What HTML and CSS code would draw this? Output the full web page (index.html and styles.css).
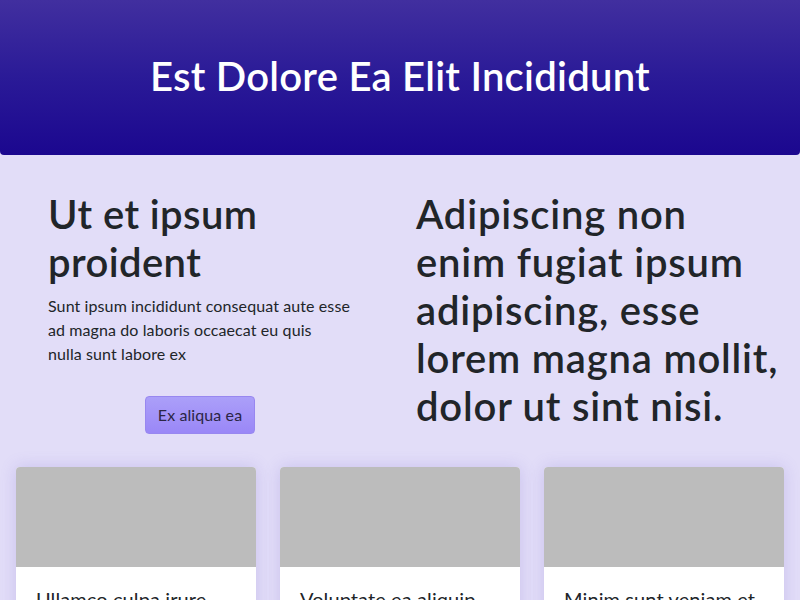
FILE: index.html
```html
<!DOCTYPE html>
<html lang="en">
<head>
<meta charset="utf-8">
<title>Est Dolore Ea Elit Incididunt</title>
<link rel="stylesheet" href="styles.css">
</head>
<body>
<header class="hero">
  <h1 class="hero-title">Est Dolore Ea Elit Incididunt</h1>
</header>
<main class="content">
  <section class="intro">
    <div class="intro-left">
      <h2 class="intro-heading">Ut et ipsum proident</h2>
      <p class="intro-text">Sunt ipsum incididunt consequat aute esse ad magna do laboris occaecat eu quis<br>nulla sunt labore ex</p>
      <div class="intro-action">
        <button class="btn" type="button">Ex aliqua ea</button>
      </div>
    </div>
    <div class="intro-right">
      <p class="statement">Adipiscing non enim fugiat ipsum adipiscing, esse lorem magna mollit, dolor ut sint nisi.</p>
    </div>
  </section>
  <section class="cards">
    <article class="card">
      <div class="card-img"></div>
      <div class="card-body">
        <h3 class="card-title">Ullamco culpa irure occaecat</h3>
        <p class="card-text">Lorem ipsum dolor sit amet, consectetur adipiscing elit.</p>
      </div>
    </article>
    <article class="card">
      <div class="card-img"></div>
      <div class="card-body">
        <h3 class="card-title">Voluptate ea aliquip commodo</h3>
        <p class="card-text">Lorem ipsum dolor sit amet, consectetur adipiscing elit.</p>
      </div>
    </article>
    <article class="card">
      <div class="card-img"></div>
      <div class="card-body">
        <h3 class="card-title">Minim sunt veniam et labore</h3>
        <p class="card-text">Lorem ipsum dolor sit amet, consectetur adipiscing elit.</p>
      </div>
    </article>
  </section>
</main>
</body>
</html>
```
FILE: styles.css
```css
* { box-sizing: border-box; }
html, body { margin: 0; padding: 0; }
body {
  background: #e2ddf8;
  color: #212529;
  font-family: Lato, "Liberation Sans", sans-serif;
  font-size: 16px;
  line-height: 1.5;
  letter-spacing: 0.1px;
}
.hero {
  background: linear-gradient(180deg, #412f9f 0%, #2a1a97 50%, #1b078f 100%);
  border-radius: 0 0 4px 4px;
  padding: 52px 16px 55px;
  text-align: center;
}
.hero-title {
  margin: 0;
  color: #fff;
  font-size: 40px;
  line-height: 48px;
  font-weight: 600;
  letter-spacing: 0.25px;
}
.content { padding: 0 16px; }
.intro {
  display: grid;
  grid-template-columns: 1fr 1fr;
  padding-top: 35px;
}
.intro-left { padding: 0 48px 0 32px; }
.intro-right { padding: 0 0 0 16px; }
.intro-heading {
  margin: 0 0 8px;
  font-size: 40px;
  line-height: 48px;
  font-weight: 600;
  letter-spacing: 0.4px;
}
.intro-text { margin: 0 0 16px; }
.intro-action { text-align: center; padding-top: 14px; }
.btn {
  font-family: inherit;
  font-size: 16px;
  line-height: 24px;
  letter-spacing: 0.1px;
  color: #2b2545;
  background: linear-gradient(180deg, #ab9ff9 0%, #9a87f7 100%);
  border: 1px solid #9887f0;
  border-radius: 4px;
  padding: 6px 12px;
}
.statement {
  margin: 0;
  max-width: 367px;
  font-size: 40px;
  line-height: 48px;
  font-weight: 600;
  letter-spacing: 0.8px;
}
.cards {
  display: grid;
  grid-template-columns: repeat(3, 1fr);
  gap: 24px;
  margin-top: 33px;
}
.card {
  background: #fff;
  border-radius: 4px;
  overflow: hidden;
  box-shadow: 0 0 16px rgba(110, 90, 200, 0.22);
}
.card-img { height: 100px; background: #bcbcbc; }
.card-body { padding: 20px; }
.card-title {
  margin: 0 0 8px;
  font-size: 20px;
  line-height: 24px;
  font-weight: 400;
}
.card-text { margin: 0; }
```
